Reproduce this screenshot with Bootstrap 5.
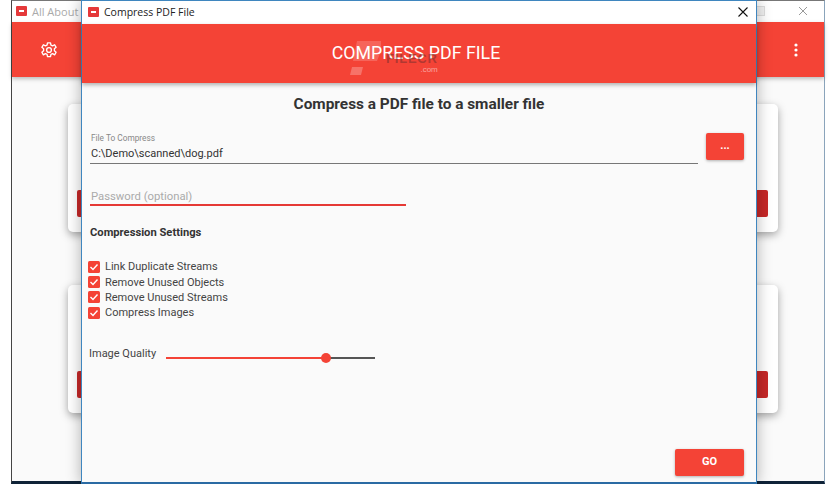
<!DOCTYPE html>
<html lang="en">
<head>
    <meta charset="UTF-8">
    <title>Compress PDF File</title>
    <link href="https://cdn.jsdelivr.net/npm/bootstrap@5.3.3/dist/css/bootstrap.min.css" rel="stylesheet">
    <style>
        html, body { height: 100%; }
        body { background: #fff; font-family: Roboto, sans-serif; overflow: hidden; position: relative; }
        .win { position: absolute; top: 0; bottom: 0; background: #fafafa; }
        .win-back { left: 11px; width: 814px; border-left: 1px solid #444; border-right: 1px solid #8aa4bb; border-top: 1px solid #777; border-bottom: 3px solid #0f2338; }
        .win-front { left: 81px; width: 676px; border: 1px solid #3f86bf; border-bottom: 2px solid #2a6aa3; box-shadow: 0 0 14px rgba(0,0,0,.3); }
        .title-back { height: 21px; background: #fff; font: 11px "Open Sans", sans-serif; color: #aaa; padding: 0 0 1px 4px; gap: 5px; }
        .title-front { height: 23px; background: #fff; font: 10.5px "Open Sans", sans-serif; color: #222; padding: 0 0 2px 6px; gap: 5px; }
        .app-ico { width: 11px; height: 10px; background: #e5393a; border-radius: 1px; position: relative; flex: none; }
        .app-ico::after { content: ""; position: absolute; left: 3px; right: 3px; top: 4px; height: 2px; background: #fff; }
        .max-ico { width: 11px; height: 10px; border: 1px solid #ddd; background: #f1f1f1; margin-right: 28px; }
        .band-back { height: 55px; background: #f44336; box-shadow: 0 2px 4px rgba(0,0,0,.25); padding: 0 26px 0 28px; }
        .band-front { height: 59px; background: #f44336; color: #fff; font-size: 17.8px; padding-right: 6px; box-shadow: 0 2px 4px rgba(0,0,0,.3); position: relative; }
        .wm-logo { position: absolute; left: 265px; top: 16px; }
        .wm { position: absolute; left: 304px; top: 28px; font: bold 13px "Liberation Sans", sans-serif; color: rgba(110,45,45,.5); line-height: 13px; letter-spacing: .8px; }
        .wm span { display: block; font: 8px "Liberation Sans", sans-serif; color: rgba(255,255,255,.5); text-align: right; letter-spacing: 0; line-height: 8px; margin-top: 1px; }
        .back-card { position: absolute; left: 56px; width: 710px; height: 128px; background: #fff; border-radius: 5px; box-shadow: 0 3px 8px rgba(0,0,0,.35); }
        .back-card i { position: absolute; top: 86px; left: 9px; right: 10px; height: 27px; background: #c62828; border-radius: 2px; }
        .heading { font-size: 15.4px; font-weight: 700; color: #333; text-align: center; margin: 12px 0 0; height: 18px; line-height: 18px; }
        .sheet { padding: 0 12px 0 8px; font-size: 11px; color: #444; }
        .top-row { margin-top: 20px; }
        .fld-wrap { padding-top: 1px; }
        .fld-cap { font-size: 8.3px; color: #888; line-height: 9px; padding-left: 1px; }
        .fld-val { font-size: 11px; color: #333; line-height: 16px; border-bottom: 1px solid #777; padding: 3px 0 1px 1px; width: 608px; }
        .more-btn { width: 38px; height: 27px; background: #f44336; color: #fff; border: 0; border-radius: 2px; font-size: 11px; font-weight: 700; padding: 0; box-shadow: 0 1px 3px rgba(0,0,0,.3); }
        .pass { width: 316px; margin-top: 25px; padding-left: 1px; font-size: 11.3px; color: #aaa; line-height: 15px; border-bottom: 2px solid #e53935; }
        .sub-head { font-weight: 700; font-size: 11.2px; color: #333; margin: 20px 0 0; line-height: 14px; }
        .checks { margin-top: 19px; margin-left: -2px; }
        .chk { height: 15.4px; gap: 5px; line-height: 15px; font-size: 11px; }
        .chk svg { flex: none; }
        .q-row { margin-top: 26px; gap: 10px; font-size: 11px; line-height: 14px; margin-left: -1px; }
        .track { width: 209px; height: 2px; background: #555; margin-top: 8px; position: relative; }
        .track b { display: block; width: 160px; height: 2px; background: #f44336; }
        .track u { position: absolute; left: 155px; top: -4px; width: 10px; height: 10px; border-radius: 50%; background: #f44336; }
        .go-btn { position: absolute; right: 12px; bottom: 6px; width: 69px; height: 27px; background: #f44336; color: #fff; border: 0; border-radius: 2px; font-size: 11px; font-weight: 700; padding: 0; box-shadow: 0 1px 3px rgba(0,0,0,.3); }
    </style>
</head>
<body>

<!-- window behind -->
<div class="win win-back">
    <div class="title-back d-flex align-items-center">
        <span class="app-ico"></span>
        <span class="flex-grow-1">All About PDF</span>
        <span class="max-ico"></span>
        <svg width="10" height="10" viewBox="0 0 10 10" class="me-3"><path d="M1 1L9 9M9 1L1 9" stroke="#999" fill="none"/></svg>
    </div>
    <div class="band-back d-flex align-items-center justify-content-between">
        <svg width="18" height="18" viewBox="0 0 24 24" fill="none" stroke="#fff" stroke-width="1.8"><circle cx="12" cy="12" r="3.2"/><path d="M10 2.5h4l.6 3 2.2 1 2.7-1.5 2 3.4-2.3 2v2.6l2.3 2-2 3.4-2.7-1.5-2.2 1-.6 3h-4l-.6-3-2.2-1-2.7 1.5-2-3.4 2.3-2v-2.6l-2.3-2 2-3.4 2.7 1.5 2.2-1z" stroke-linejoin="round"/></svg>
        <svg width="4" height="14" viewBox="0 0 4 14" fill="#fff"><circle cx="2" cy="2" r="1.6"/><circle cx="2" cy="7" r="1.6"/><circle cx="2" cy="12" r="1.6"/></svg>
    </div>
    <div class="back-card" style="top:103px"><i></i></div>
    <div class="back-card" style="top:284px"><i></i></div>
</div>

<!-- dialog in front -->
<div class="win win-front">
    <div class="title-front d-flex align-items-center">
        <span class="app-ico"></span>
        <span class="flex-grow-1">Compress PDF File</span>
        <svg width="10" height="10" viewBox="0 0 10 10" class="me-2"><path d="M.5.5L9.5 9.5M9.5.5L.5 9.5" stroke="#111" stroke-width="1.1" fill="none"/></svg>
    </div>
    <div class="band-front d-flex align-items-center justify-content-center">
        <svg class="wm-logo" width="34" height="36" viewBox="0 0 34 36"><path d="M10 1h28l-8 20H6z" fill="rgba(255,255,255,.18)"/><path d="M5 27h11l-2 8H3z" fill="rgba(255,255,255,.25)"/></svg>
        COMPRESS PDF FILE
        <div class="wm">FILECR<span>.com</span></div>
    </div>
    <h1 class="heading">Compress a PDF file to a smaller file</h1>
    <div class="sheet">
        <div class="top-row d-flex justify-content-between align-items-start">
            <div class="fld-wrap">
                <div class="fld-cap">File To Compress</div>
                <div class="fld-val">C:\Demo\scanned\dog.pdf</div>
            </div>
            <button class="more-btn" type="button">...</button>
        </div>
        <div class="pass">Password (optional)</div>
        <div class="sub-head">Compression Settings</div>
        <div class="checks">
            <div class="chk d-flex align-items-center"><svg width="12" height="12" viewBox="0 0 12 12"><rect width="12" height="12" rx="1.5" fill="#f44336"/><path d="M2.5 6l2.5 2.5 4.5-5" stroke="#fff" stroke-width="1.4" fill="none"/></svg>Link Duplicate Streams</div>
            <div class="chk d-flex align-items-center"><svg width="12" height="12" viewBox="0 0 12 12"><rect width="12" height="12" rx="1.5" fill="#f44336"/><path d="M2.5 6l2.5 2.5 4.5-5" stroke="#fff" stroke-width="1.4" fill="none"/></svg>Remove Unused Objects</div>
            <div class="chk d-flex align-items-center"><svg width="12" height="12" viewBox="0 0 12 12"><rect width="12" height="12" rx="1.5" fill="#f44336"/><path d="M2.5 6l2.5 2.5 4.5-5" stroke="#fff" stroke-width="1.4" fill="none"/></svg>Remove Unused Streams</div>
            <div class="chk d-flex align-items-center"><svg width="12" height="12" viewBox="0 0 12 12"><rect width="12" height="12" rx="1.5" fill="#f44336"/><path d="M2.5 6l2.5 2.5 4.5-5" stroke="#fff" stroke-width="1.4" fill="none"/></svg>Compress Images</div>
        </div>
        <div class="q-row d-flex align-items-center">
            <span>Image Quality</span>
            <div class="track"><b></b><u></u></div>
        </div>
    </div>
    <button class="go-btn" type="button">GO</button>
</div>

<script src="https://cdn.jsdelivr.net/npm/bootstrap@5.3.3/dist/js/bootstrap.bundle.min.js"></script>
</body>
</html>
